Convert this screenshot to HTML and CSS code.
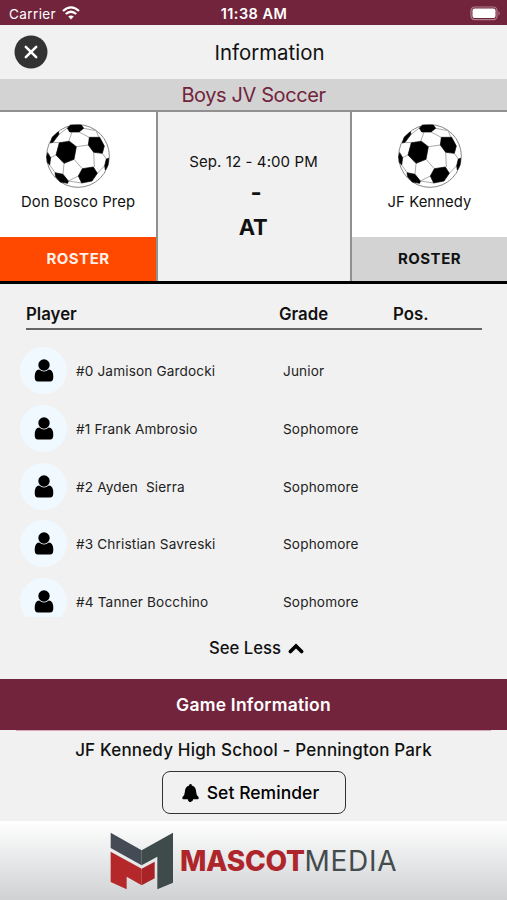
FILE: index.html
```html
<!DOCTYPE html>
<html lang="en">
<head>
<meta charset="utf-8">
<title>Information</title>
<link rel="stylesheet" href="styles.css">
</head>
<body>
<svg class="defs" aria-hidden="true">
  <symbol id="ball" viewBox="0 0 192 192">
    <circle cx="96" cy="96" r="94" fill="#fff" stroke="#888" stroke-width="3"/>
    <path d="M68 52 78 24M39 31 64 12M40 56 21 55M99 24 130 40M113 13 150 20 159 40M91 68 127 63M84 106 109 134M143 85 145 129M54 118 51 151M30 93 14 101M11 123 27 146M67 171 107 177M169 88 181 105M154 148 176 125M97 156 67 171" fill="none" stroke="#aaa" stroke-width="3"/>
    <g fill="#000" stroke="#000" stroke-width="2" stroke-linejoin="round">
      <path d="M40 56 70 52 91 68 84 106 54 118 30 93Z"/>
      <path d="M130 40 161 40 175 66 169 88 143 85 127 63Z"/>
      <path d="M109 134 142 129 154 148 138 171 107 177 97 156Z"/>
      <path d="M74 3 106 3 113 13 99 24 71 24 64 12Z"/>
      <path d="M37 23 39 31 21 55 13 57 19 39Z"/>
      <path d="M5 86 14 101 11 123 4 115 2 98Z"/>
      <path d="M27 146 51 151 67 171 65 178 43 174 29 158Z"/>
      <path d="M188 103 186 123 178 138 176 125 181 105Z"/>
    </g>
  </symbol>
  <symbol id="person" viewBox="0 0 20 23">
    <circle cx="10" cy="6" r="5.7"/>
    <path d="M5.2 10.6Q10 14.6 14.8 10.6Q19.3 11 19.3 18Q19.3 22.5 16 22.5H4Q.7 22.5.7 18Q.7 11 5.2 10.6Z"/>
  </symbol>
</svg>
<div class="status">
  <div class="carrier"><span>Carrier</span>
    <svg width="18" height="14" viewBox="0 0 18 14"><g fill="none" stroke="#fff" stroke-width="2.3"><path d="M1 5Q9-2.2 17 5"/><path d="M3.8 8Q9 3.4 14.2 8"/></g><path d="M6.2 10.6Q9 8.2 11.8 10.6L9 13.5Z" fill="#fff"/></svg>
  </div>
  <span class="clock">11:38 AM</span>
  <svg class="battery" width="31" height="15" viewBox="0 0 31 15"><rect x="1" y="1" width="26" height="12.6" rx="3.6" fill="none" stroke="#b08090" stroke-width="1.2"/><rect x="2.5" y="2.6" width="23" height="9.4" rx="2" fill="#fff"/><path d="M28.5 5.2Q31 7.3 28.5 9.4Z" fill="#b08090"/></svg>
</div>
<header class="nav">
  <svg class="close" width="34" height="34" viewBox="0 0 34 34"><circle cx="17" cy="17" r="16.5" fill="#333"/><path d="M11.8 11.8 22.2 22.2M22.2 11.8 11.8 22.2" stroke="#fff" stroke-width="2.5" stroke-linecap="round"/></svg>
  <h1>Information</h1>
</header>
<div class="sport">Boys JV Soccer</div>
<section class="match">
  <div class="team">
    <svg class="ball" width="64" height="64"><use href="#ball"/></svg>
    <div class="name">Don Bosco Prep</div>
    <div class="roster active">ROSTER</div>
  </div>
  <div class="versus">
    <div class="when">Sep. 12 - 4:00 PM</div>
    <div class="dash">-</div>
    <div class="at">AT</div>
  </div>
  <div class="team">
    <svg class="ball" width="64" height="64"><use href="#ball"/></svg>
    <div class="name">JF Kennedy</div>
    <div class="roster">ROSTER</div>
  </div>
</section>
<section class="players">
  <div class="head"><span>Player</span><span>Grade</span><span>Pos.</span></div>
  <div class="list">
    <div class="row"><div class="avatar"><svg width="20" height="23"><use href="#person"/></svg></div><span>#0 Jamison Gardocki</span><span>Junior</span></div>
    <div class="row"><div class="avatar"><svg width="20" height="23"><use href="#person"/></svg></div><span>#1 Frank Ambrosio</span><span>Sophomore</span></div>
    <div class="row"><div class="avatar"><svg width="20" height="23"><use href="#person"/></svg></div><span>#2 Ayden&nbsp; Sierra</span><span>Sophomore</span></div>
    <div class="row"><div class="avatar"><svg width="20" height="23"><use href="#person"/></svg></div><span>#3 Christian Savreski</span><span>Sophomore</span></div>
    <div class="row"><div class="avatar"><svg width="20" height="23"><use href="#person"/></svg></div><span>#4 Tanner Bocchino</span><span>Sophomore</span></div>
  </div>
  <div class="less"><span>See Less</span><svg width="16" height="11" viewBox="0 0 16 11"><path d="M2.4 8.6 8 3 13.6 8.6" fill="none" stroke="#000" stroke-width="3.6" stroke-linecap="round"/></svg></div>
</section>
<div class="game">Game Information</div>
<section class="venue">
  <div class="rule"></div>
  <div class="place">JF Kennedy High School - Pennington Park</div>
  <button class="remind"><svg width="17" height="18" viewBox="0 0 17 18"><path d="M8.5 0Q9.8 0 9.8 1.4Q13.8 2.4 14 7Q14.1 11 16.5 13.1Q17.1 15.2 15.6 15.2H11.2Q10.8 18 8.5 18Q6.2 18 5.8 15.2H1.4Q-.1 15.2.5 13.1Q2.9 11 3 7Q3.2 2.4 7.2 1.4Q7.2 0 8.5 0Z"/></svg><span>Set Reminder</span></button>
</section>
<footer class="sponsor">
  <svg width="64" height="58" viewBox="18 18 192 174"><path d="M20 20 113 73V118L20 66Z" fill="#454b54"/><path d="M113 73 207 20V170L160 190V92L113 118Z" fill="#3f4b4b"/><path d="M20 77 113 128V178L68 152V190L20 168Z" fill="#b42829"/><path d="M113 128 152 107V157L113 178Z" fill="#a82226"/></svg>
  <div class="brand"><b>MASCOT</b><span>MEDIA</span></div>
</footer>
</body>
</html>
```

FILE: styles.css
```css
* { box-sizing: border-box; }
body { margin: 0; width: 507px; height: 900px; overflow: hidden; display: flex; flex-direction: column; background: #f1f1f1; color: #111; font-family: Inter, "Liberation Sans", sans-serif; }
.defs { position: absolute; width: 0; height: 0; }
.status { height: 25px; flex: none; background: #72243d; color: #fff; display: grid; grid-template-columns: 1fr auto 1fr; align-items: center; padding: 2px 6px 0 9px; font-size: 13.5px; }
.carrier { display: flex; align-items: center; gap: 6px; letter-spacing: .4px; }
.carrier svg { margin-top: -2px; }
.clock { font-size: 14.5px; font-weight: 600; letter-spacing: .45px; padding-right: 2px; }
.battery { justify-self: end; }
.nav { height: 54px; flex: none; display: grid; grid-template-columns: 34px 1fr 34px; align-items: center; padding: 0 0 0 14px; }
h1 { margin: 0; font-size: 20.4px; font-weight: 400; text-align: center; padding-left: 18px; }
.sport { height: 33px; flex: none; background: #d3d3d3; border-bottom: 2px solid #909090; color: #72243d; text-align: center; font-size: 20px; line-height: 33px; letter-spacing: -.4px; }
.match { height: 172px; flex: none; display: grid; grid-template-columns: 156px 196px 155px; border-bottom: 3px solid #000; }
.team { background: #fff; display: flex; flex-direction: column; align-items: center; padding-top: 12px; }
.name { font-size: 14.8px; line-height: 20px; letter-spacing: .1px; margin-top: 4px; }
.roster { margin-top: auto; width: 100%; height: 44px; background: #d3d3d3; text-align: center; font-size: 15px; font-weight: 700; line-height: 44px; letter-spacing: .5px; }
.active { background: #ff4800; color: #fff1e8; }
.versus { border-left: 2px solid #909090; border-right: 2px solid #909090; text-align: center; padding-top: 40px; }
.when { font-size: 15px; line-height: 20px; letter-spacing: .1px; padding-right: 1px; }
.dash { font-size: 24px; font-weight: 700; line-height: 36px; padding-left: 4px; margin-top: 3px; }
.at { font-size: 22px; font-weight: 700; line-height: 36px; padding-right: 2px; letter-spacing: -.3px; margin-top: -2px; }
.players { height: 395px; flex: none; padding: 18px 25px 0 26px; }
.head { display: grid; grid-template-columns: 253px 114px 1fr; height: 28px; border-bottom: 2px solid #666; font-size: 16.8px; font-weight: 600; line-height: 24px; }
.list { height: 287px; overflow: hidden; padding-top: 17px; margin-left: -6px; }
.row { height: 57.8px; display: grid; grid-template-columns: 56px 207px 1fr; align-items: start; font-size: 13.6px; line-height: 48px; letter-spacing: .15px; color: #222; }
.avatar { width: 47px; height: 47px; border-radius: 50%; background: #f0f9ff; display: grid; place-items: center; }
.less { display: flex; justify-content: center; align-items: center; gap: 7px; font-size: 16.7px; line-height: 22px; font-weight: 500; margin-top: 20px; padding-left: 5px; }
.game { height: 51px; flex: none; background: #72243d; color: #fff; text-align: center; font-size: 17.5px; font-weight: 600; line-height: 52px; letter-spacing: .22px; }
.venue { height: 91px; flex: none; display: flex; flex-direction: column; align-items: center; }
.rule { width: 475px; height: 1px; background: #d5a9b8; }
.place { font-size: 17px; font-weight: 500; line-height: 24px; letter-spacing: .18px; margin-top: 7px; }
.remind { width: 184px; height: 43px; margin-top: 9px; background: none; border: 1.5px solid #333; border-radius: 8px; font: 500 17.5px Inter, sans-serif; letter-spacing: .05px; display: flex; justify-content: center; align-items: center; gap: 8px; padding: 0 6px 0 0; color: #000; }
.sponsor { flex: 1; background: linear-gradient(#fff, #cfd1d3); display: flex; align-items: flex-start; padding: 11px 0 0 110px; gap: 6px; }
.brand { font-size: 28px; line-height: 59px; display: flex; }
.brand b { color: #ae262b; font-weight: 800; letter-spacing: -.3px; }
.brand span { color: #434b4d; letter-spacing: .7px; }
```
